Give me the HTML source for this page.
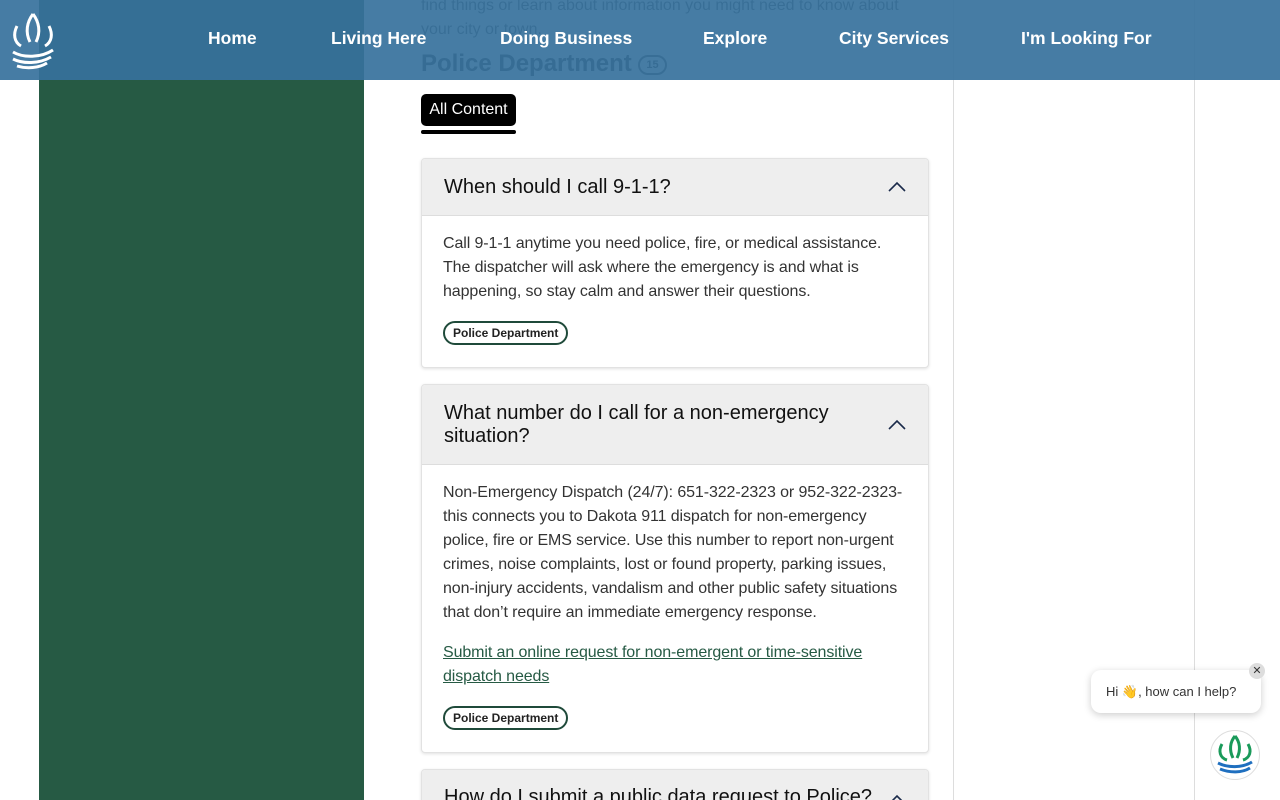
<!DOCTYPE html>
<html><head><meta charset="utf-8"><style>
*{margin:0;padding:0;box-sizing:border-box}
html,body{width:1280px;height:800px;overflow:hidden}
body{background:#fff;font-family:"Liberation Sans",sans-serif;position:relative}
.abs{position:absolute}
.green{left:39px;top:0;width:325px;height:800px;background:#265a44}
.vline{top:0;width:1px;height:800px;background:#ddd}
.card{left:421px;width:508px;background:#fff;border:1px solid #e2e2e2;border-radius:4px;box-shadow:0 1px 3px rgba(0,0,0,.12);overflow:hidden}
.hd{background:#eee;border-bottom:1px solid #ddd;padding:0 22px;font-size:20px;color:#111;position:relative;display:flex;align-items:center}
.hd svg{position:absolute;right:22px;top:50%;margin-top:-6px}
.bd{padding:16px 10px 0 21px;font-size:16px;line-height:24px;color:#333;letter-spacing:-0.1px;white-space:nowrap}
.tag{display:inline-block;border:2px solid #1f4a3a;border-radius:12px;font-size:12px;font-weight:bold;color:#222;padding:3px 8px;line-height:14px;letter-spacing:0}
a{color:#265a44}
.hdr{left:0;top:0;width:1280px;height:80px;background:rgba(54,113,156,.92)}
.nav{top:28px;color:#fff;font-weight:bold;font-size:17.5px}
</style></head><body>
<div class="abs green"></div>
<div class="abs vline" style="left:953px"></div>
<div class="abs vline" style="left:1194px"></div>
<div class="abs" style="left:421px;top:-6px;font-size:16px;color:#555;line-height:24px">find things or learn about information you might need to know about<br>your city or town.</div>
<div class="abs" style="left:421px;top:50px;font-size:24px;color:#333;font-weight:bold">Police Department <span style="display:inline-block;border:2px solid #555;border-radius:12px;font-size:11px;padding:2px 6px;vertical-align:middle">15</span></div>
<div class="abs" style="left:421px;top:94px;width:95px;height:32px;background:#000;border-radius:5px;color:#fff;font-size:16px;line-height:32px;text-align:center">All Content</div>
<div class="abs" style="left:421px;top:130px;width:95px;height:4px;background:#000;border-radius:2px"></div>

<div class="abs card" style="top:158px;height:210px">
<div class="hd" style="height:57px">When should I call 9-1-1?<svg width="18" height="11" viewBox="0 0 18 11"><path d="M1 10L9 2l8 8" fill="none" stroke="#1a2a4a" stroke-width="1.6"/></svg></div>
<div class="bd">Call 9-1-1 anytime you need police, fire, or medical assistance.<br>The dispatcher will ask where the emergency is and what is<br>happening, so stay calm and answer their questions.<div style="margin-top:17px"><span class="tag">Police Department</span></div></div>
</div>

<div class="abs card" style="top:384px;height:369px">
<div class="hd" style="height:80px;line-height:23px">What number do I call for a non-emergency<br>situation?<svg width="18" height="11" viewBox="0 0 18 11"><path d="M1 10L9 2l8 8" fill="none" stroke="#1a2a4a" stroke-width="1.6"/></svg></div>
<div class="bd" style="padding-top:16px">Non-Emergency Dispatch (24/7): 651-322-2323 or 952-322-2323-<br>this connects you to Dakota 911 dispatch for non-emergency<br>police, fire or EMS service. Use this number to report non-urgent<br>crimes, noise complaints, lost or found property, parking issues,<br>non-injury accidents, vandalism and other public safety situations<br>that don’t require an immediate emergency response.<div style="margin-top:16px"><a href="#">Submit an online request for non-emergent or time-sensitive<br>dispatch needs</a></div><div style="margin-top:17px"><span class="tag">Police Department</span></div></div>
</div>

<div class="abs card" style="top:769px;height:60px">
<div class="hd" style="height:60px;align-items:flex-start;padding-top:16px">How do I submit a public data request to Police?<svg width="18" height="11" viewBox="0 0 18 11" style="top:30px"><path d="M1 10L9 2l8 8" fill="none" stroke="#1a2a4a" stroke-width="1.6"/></svg></div>
</div>

<div class="abs hdr"></div>
<svg class="abs" style="left:9px;top:10px" width="48" height="60" viewBox="0 0 48 60"><g fill="none" stroke="#fff" stroke-width="3"><path d="M24 4c-6 8-8 18-3 28M24 4c6 8 8 18 3 28"/><path d="M8 16c-4 8-3 16 4 20M40 16c4 8 3 16-4 20"/><path d="M4 42c10 6 28 6 40-2M4 49c10 5 26 5 38-2M8 56c10 3 22 2 30-3"/></g></svg>
<div class="abs nav" style="left:208px">Home</div>
<div class="abs nav" style="left:331px">Living Here</div>
<div class="abs nav" style="left:500px">Doing Business</div>
<div class="abs nav" style="left:703px">Explore</div>
<div class="abs nav" style="left:839px">City Services</div>
<div class="abs nav" style="left:1021px">I'm Looking For</div>

<div class="abs" style="left:1091px;top:670px;width:170px;height:43px;background:#fff;border-radius:10px;box-shadow:0 2px 8px rgba(0,0,0,.2);font-size:13px;color:#333;line-height:43px;padding-left:15px">Hi 👋, how can I help?</div>
<div class="abs" style="left:1249px;top:663px;width:16px;height:16px;border-radius:8px;background:#ddd;font-size:11px;text-align:center;line-height:16px;color:#333">✕</div>
<div class="abs" style="left:1210px;top:730px;width:50px;height:50px;border-radius:25px;background:#fff;border:1px solid #ddd"></div>
<svg class="abs" style="left:1214px;top:733px" width="42" height="44" viewBox="0 0 42 44"><path d="M21 3c-5 6-6 14-2 22M21 3c5 6 6 14 2 22M8 11c-4 7-2 14 5 16M34 11c4 7 2 14-5 16" fill="none" stroke="#1a9a5a" stroke-width="3"/><path d="M4 30c10 5 24 5 34-1M6 36c10 4 22 4 30-1" fill="none" stroke="#1f6fbf" stroke-width="3"/></svg>
</body></html>
